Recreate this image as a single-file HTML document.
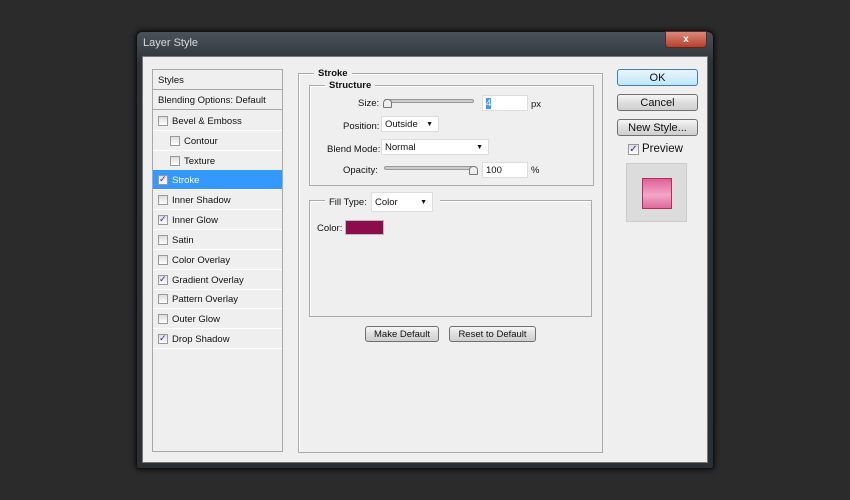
<!DOCTYPE html>
<html><head><style>
*{box-sizing:border-box;margin:0;padding:0}
body{width:850px;height:500px;background:#2b2b2b;position:relative;overflow:hidden;font-family:"Liberation Sans",sans-serif;font-size:9.5px;color:#111}
.a{position:absolute}
.win{left:136px;top:31px;width:578px;height:438px;background:linear-gradient(#4a525a,#2e3338 30px,#2a2f34);border:1px solid #111;border-radius:6px 6px 3px 3px;box-shadow:0 0 6px #000}
.content{left:142px;top:56px;width:566px;height:407px;background:#efefef;border:1px solid #777}
.panel{left:152px;top:69px;width:131px;height:383px;border:1px solid #a8a8a8;background:#efefef}
.row{position:absolute;left:0;width:129px;height:20px;border-bottom:1px solid #fff;line-height:21px;padding-left:19px}
.cb{position:absolute;width:10px;height:10px;border:1px solid #999;background:linear-gradient(#ddd,#fff);top:5px;left:5px}
.ck::after{content:"✓";position:absolute;left:0;top:-3px;font-size:9px;line-height:12px;color:#2a2aa0}
.grp{border:1px solid #aaa;box-shadow:inset 1px 1px 0 #fff}
.lbl{position:absolute;background:#efefef;padding:0 4px;font-weight:bold}
.inp{position:absolute;background:#fff;border:1px solid #ddd;height:16px;line-height:16px;padding-left:3px}
.dd::after{content:"▼";position:absolute;right:5px;top:0;font-size:7px}
.btn{position:absolute;border:1px solid #707070;border-radius:3px;background:linear-gradient(#f6f6f6,#dedede 50%,#cfcfcf);text-align:center;font-size:11px;line-height:16px}
.sl{position:absolute;height:4px;border:1px solid #999;border-radius:2px;background:#ccc}
.th{position:absolute;width:9px;height:9px;border:1px solid #777;background:#eee;border-radius:4px 4px 1px 1px}
</style></head><body>
<div class="a win"></div>
<div class="a" style="left:143px;top:37px;color:#d8d8d8;font-size:11px">Layer Style</div>
<div class="a" style="left:665px;top:31px;width:42px;height:17px;border-radius:0 0 4px 4px;background:linear-gradient(#d98a7a,#b8402c);border:1px solid #5a2a22;color:#fff;text-align:center;font-weight:bold;font-size:10px;line-height:15px">x</div>
<div class="a content"></div>
<div class="a panel">
<div class="row" style="top:0;padding-left:5px;border-bottom:1px solid #a8a8a8">Styles</div>
<div class="row" style="top:20px;padding-left:5px;border-bottom:1px solid #a8a8a8">Blending Options: Default</div>
<div class="row" style="top:41px"><span class="cb"></span>Bevel &amp; Emboss</div>
<div class="row" style="top:61px;padding-left:31px"><span class="cb" style="left:17px"></span>Contour</div>
<div class="row" style="top:81px;padding-left:31px"><span class="cb" style="left:17px"></span>Texture</div>
<div class="row" style="top:100px;background:#3399ff;color:#fff"><span class="cb ck"></span>Stroke</div>
<div class="row" style="top:120px"><span class="cb"></span>Inner Shadow</div>
<div class="row" style="top:140px"><span class="cb ck"></span>Inner Glow</div>
<div class="row" style="top:160px"><span class="cb"></span>Satin</div>
<div class="row" style="top:180px"><span class="cb"></span>Color Overlay</div>
<div class="row" style="top:200px"><span class="cb ck"></span>Gradient Overlay</div>
<div class="row" style="top:219px"><span class="cb"></span>Pattern Overlay</div>
<div class="row" style="top:239px"><span class="cb"></span>Outer Glow</div>
<div class="row" style="top:259px"><span class="cb ck"></span>Drop Shadow</div>
</div>
<div class="a grp" style="left:298px;top:73px;width:305px;height:380px"></div>
<div class="lbl" style="left:314px;top:68px">Stroke</div>
<div class="a grp" style="left:309px;top:85px;width:285px;height:101px"></div>
<div class="lbl" style="left:325px;top:80px">Structure</div>
<div class="a" style="left:358px;top:98px">Size:</div>
<div class="sl" style="left:384px;top:99px;width:90px"></div>
<div class="th" style="left:383px;top:99px"></div>
<div class="inp" style="left:482px;top:95px;width:46px"><span style="background:#3399ff;color:#fff">4</span></div>
<div class="a" style="left:531px;top:99px">px</div>
<div class="a" style="left:343px;top:121px">Position:</div>
<div class="inp dd" style="left:381px;top:116px;width:58px">Outside</div>
<div class="a" style="left:327px;top:144px">Blend Mode:</div>
<div class="inp dd" style="left:381px;top:139px;width:108px">Normal</div>
<div class="a" style="left:343px;top:165px">Opacity:</div>
<div class="sl" style="left:384px;top:166px;width:90px"></div>
<div class="th" style="left:469px;top:166px"></div>
<div class="inp" style="left:482px;top:162px;width:46px">100</div>
<div class="a" style="left:531px;top:165px">%</div>
<div class="a grp" style="left:309px;top:200px;width:283px;height:117px"></div>
<div class="a" style="left:325px;top:192px;width:115px;height:20px;background:#efefef"></div>
<div class="a" style="left:329px;top:197px">Fill Type:</div>
<div class="inp dd" style="left:371px;top:192px;width:62px;height:20px;line-height:19px">Color</div>
<div class="a" style="left:317px;top:223px">Color:</div>
<div class="a" style="left:345px;top:220px;width:39px;height:15px;background:#8c0c4c;border:1px solid #bbb"></div>
<div class="btn" style="left:365px;top:326px;width:74px;height:16px;font-size:9.5px">Make Default</div>
<div class="btn" style="left:449px;top:326px;width:87px;height:16px;font-size:9.5px">Reset to Default</div>
<div class="btn" style="left:617px;top:69px;width:81px;height:17px;border-color:#3c7fb1;background:linear-gradient(#eaf6fd,#bee6fd)">OK</div>
<div class="btn" style="left:617px;top:94px;width:81px;height:17px">Cancel</div>
<div class="btn" style="left:617px;top:119px;width:81px;height:17px">New Style...</div>
<div class="a" style="left:628px;top:144px;width:11px;height:11px;border:1px solid #999;background:linear-gradient(#ddd,#fff);color:#2a2aa0;font-size:10px;line-height:10px;text-align:center">✓</div>
<div class="a" style="left:642px;top:143px;font-size:11.5px">Preview</div>
<div class="a" style="left:626px;top:163px;width:61px;height:59px;background:#dcdcdc;border:1px solid #ccc"></div>
<div class="a" style="left:642px;top:178px;width:30px;height:31px;border:1px solid #b0305a;background:linear-gradient(#e0609a,#f3a6c8 55%,#e06a9e)"></div>
</body></html>
